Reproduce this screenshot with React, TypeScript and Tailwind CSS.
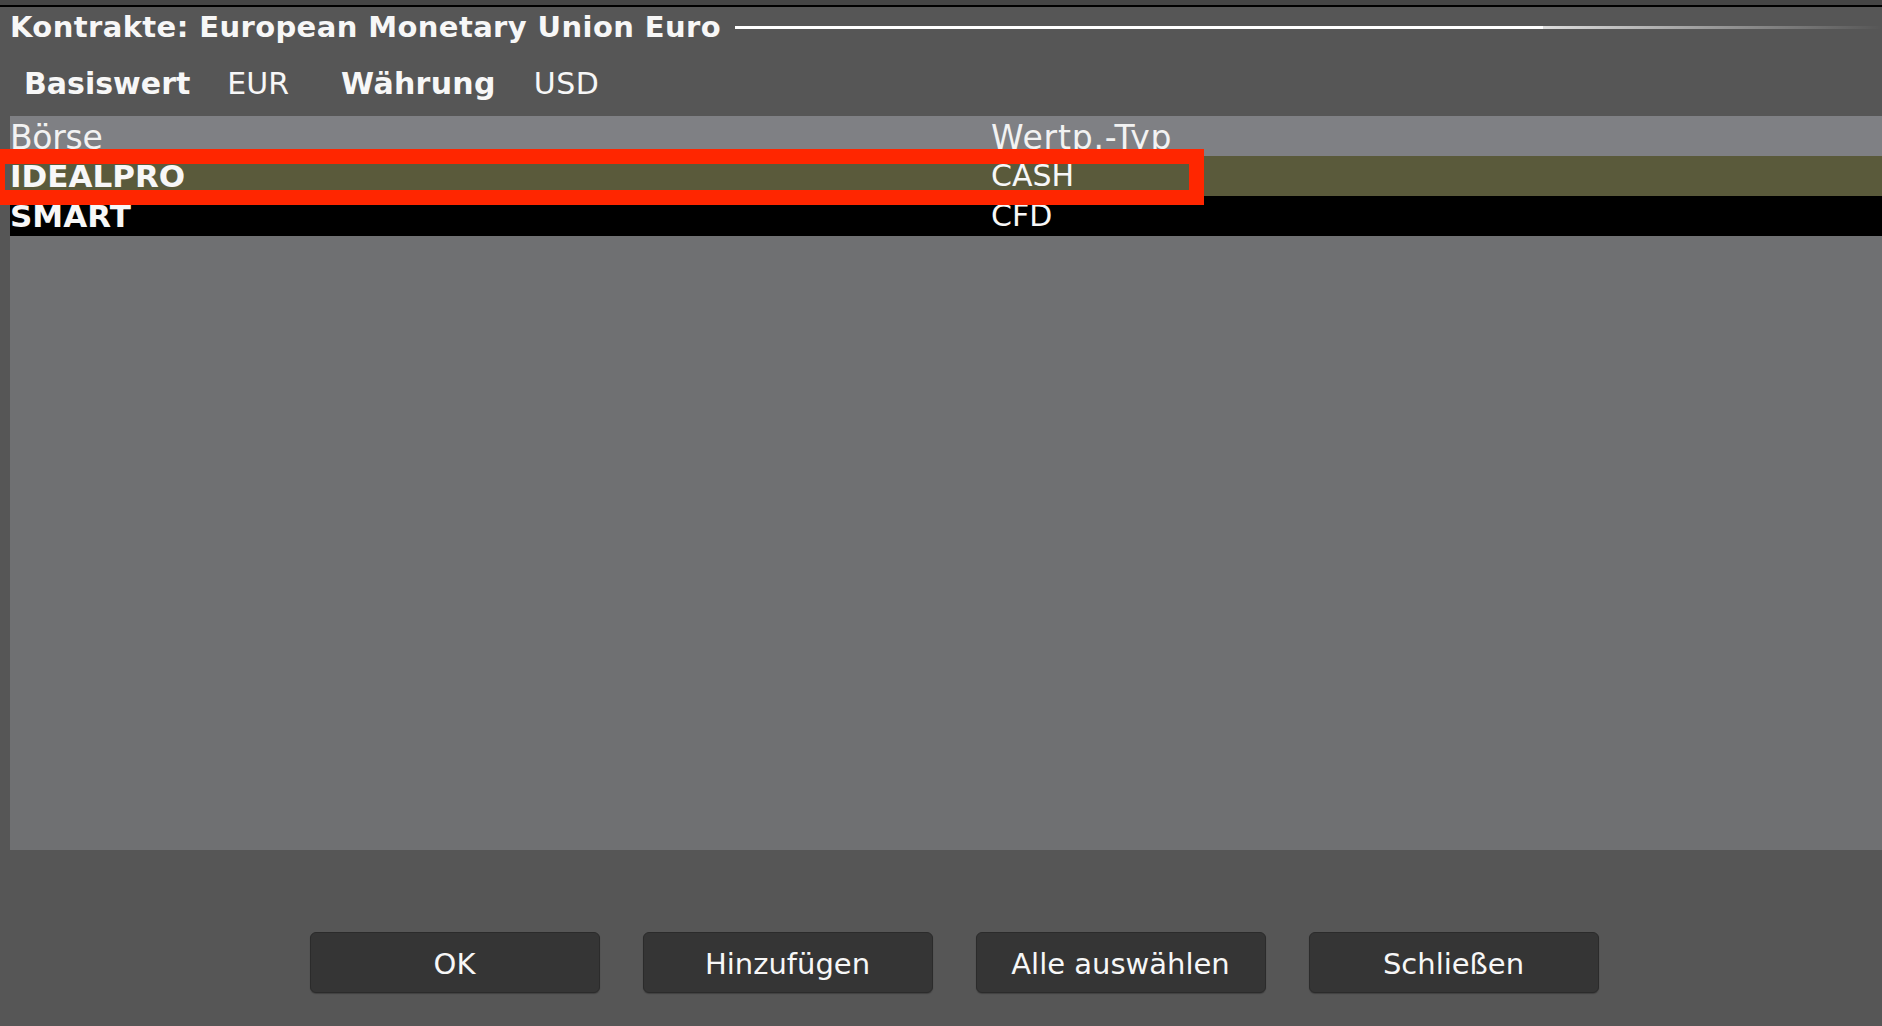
import React from 'react';

const rows = [
  { exchange: 'IDEALPRO', type: 'CASH', selected: true },
  { exchange: 'SMART', type: 'CFD', selected: false },
];

const buttons = ['OK', 'Hinzufügen', 'Alle auswählen', 'Schließen'];

const App = () => {
  return (
    <div className="h-[1026px] w-full overflow-hidden bg-[#565656] text-[#f7f7f7] font-['DejaVu_Sans',sans-serif] flex flex-col">
      {/* Window chrome strip */}
      <div className="h-[5px] bg-[#454545]" />
      <div className="h-[2px] bg-black" />

      {/* Title with trailing rule */}
      <div className="h-[37px] flex items-start pl-[10px] pt-[2px]">
        <h1 className="text-[29px] leading-[36px] font-bold tracking-[0.4px] whitespace-nowrap">
          Kontrakte: European Monetary Union Euro
        </h1>
        <div className="ml-[14px] mt-[17px] flex-1 flex h-[3px]">
          <div className="w-[808px] bg-white" />
          <div className="flex-1 bg-gradient-to-r from-white/80 to-transparent" />
        </div>
      </div>

      {/* Underlying / currency */}
      <div className="h-[72px] flex items-center pt-[7px] pl-[24px] text-[30px] leading-[36px] whitespace-nowrap">
        <span className="font-bold">Basiswert</span>
        <span className="ml-[37px]">EUR</span>
        <span className="ml-[52px] font-bold tracking-[0.3px]">Währung</span>
        <span className="ml-[38px] tracking-[0.5px]">USD</span>
      </div>

      {/* Contract table */}
      <div className="relative ml-[10px] h-[734px] bg-[#6f7072]">
        <div className="h-[40px] overflow-hidden pt-[2px] bg-[#7f8084] grid grid-cols-[981px_1fr] text-[33px] leading-[40px] text-[#f2f2f2]">
          <div className="tracking-[-0.3px]">Börse</div>
          <div className="tracking-[0.8px]">Wertp.-Typ</div>
        </div>
        {rows.map((r) => (
          <div
            key={r.exchange}
            className={`h-[40px] grid grid-cols-[981px_1fr] text-[30px] leading-[40px] ${
              r.selected ? 'bg-[#5a5a3b]' : 'bg-black'
            }`}
          >
            <div className="font-bold text-[31px]">{r.exchange}</div>
            <div>{r.type}</div>
          </div>
        ))}

        {/* Highlight frame around the selected row */}
        <div className="absolute left-[-20px] top-[33px] w-[1214px] h-[56px] border-[15px] border-[#ff2600]" />
      </div>

      {/* Action buttons */}
      <div className="mt-[82px] flex justify-center gap-[43px] pl-[26px]">
        {buttons.map((b) => (
          <button
            key={b}
            className="w-[290px] h-[61px] pt-[3px] rounded-[6px] bg-[#353535] border border-[#2b2b2b] shadow-[0_1px_1px_rgba(0,0,0,0.25)] text-[29px] leading-[34px] text-[#f7f7f7]"
          >
            {b}
          </button>
        ))}
      </div>
    </div>
  );
};

export default App;
